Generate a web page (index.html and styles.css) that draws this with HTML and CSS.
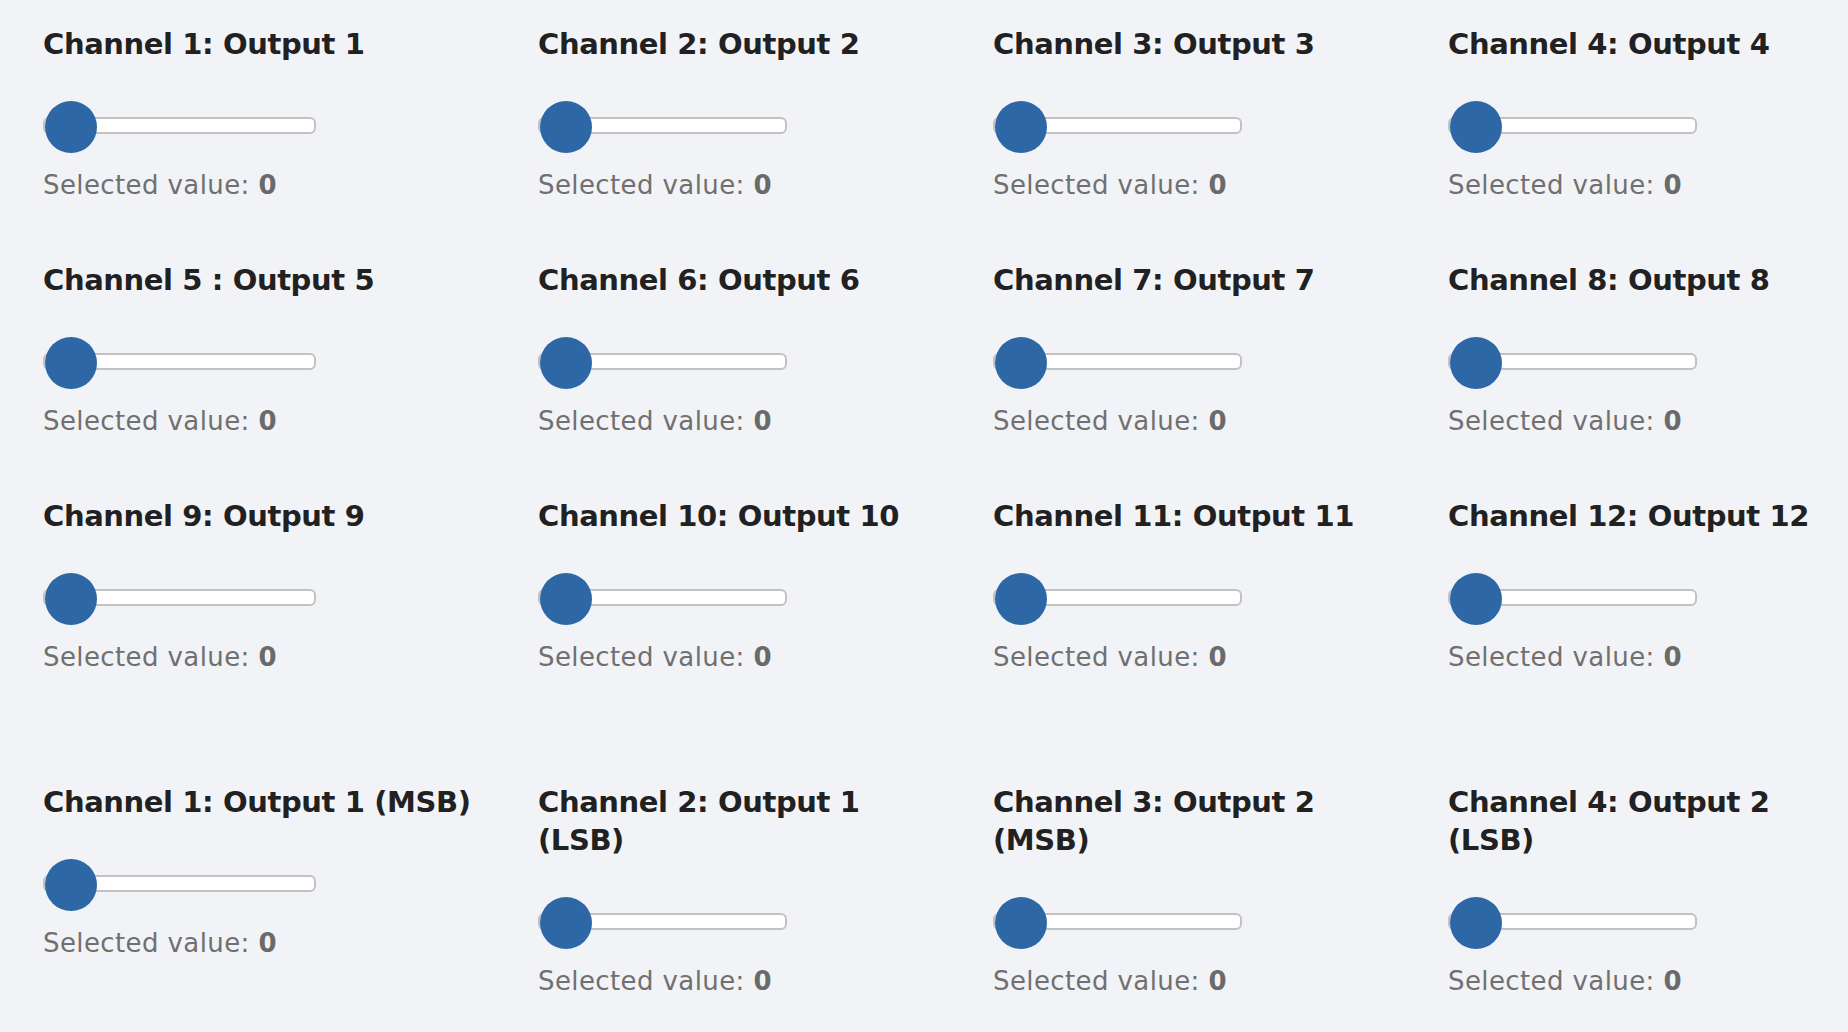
FILE: index.html
```html
<html>
	<head>
		<title>DMX Channels</title>
		<link rel="stylesheet" href="styles.css">
	</head>
	<body>
		<div class="channels">
			<div class="channel">
				<h3>Channel 1: Output 1</h3>
				<input type="range" class="slider" min="0" max="255" value="0" oninput="Show(this)">
				<p>Selected value: <b>0</b></p>
			</div>
			<div class="channel">
				<h3>Channel 2: Output 2</h3>
				<input type="range" class="slider" min="0" max="255" value="0" oninput="Show(this)">
				<p>Selected value: <b>0</b></p>
			</div>
			<div class="channel">
				<h3>Channel 3: Output 3</h3>
				<input type="range" class="slider" min="0" max="255" value="0" oninput="Show(this)">
				<p>Selected value: <b>0</b></p>
			</div>
			<div class="channel">
				<h3>Channel 4: Output 4</h3>
				<input type="range" class="slider" min="0" max="255" value="0" oninput="Show(this)">
				<p>Selected value: <b>0</b></p>
			</div>
			<div class="channel">
				<h3>Channel 5 : Output 5</h3>
				<input type="range" class="slider" min="0" max="255" value="0" oninput="Show(this)">
				<p>Selected value: <b>0</b></p>
			</div>
			<div class="channel">
				<h3>Channel 6: Output 6</h3>
				<input type="range" class="slider" min="0" max="255" value="0" oninput="Show(this)">
				<p>Selected value: <b>0</b></p>
			</div>
			<div class="channel">
				<h3>Channel 7: Output 7</h3>
				<input type="range" class="slider" min="0" max="255" value="0" oninput="Show(this)">
				<p>Selected value: <b>0</b></p>
			</div>
			<div class="channel">
				<h3>Channel 8: Output 8</h3>
				<input type="range" class="slider" min="0" max="255" value="0" oninput="Show(this)">
				<p>Selected value: <b>0</b></p>
			</div>
			<div class="channel">
				<h3>Channel 9: Output 9</h3>
				<input type="range" class="slider" min="0" max="255" value="0" oninput="Show(this)">
				<p>Selected value: <b>0</b></p>
			</div>
			<div class="channel">
				<h3>Channel 10: Output 10</h3>
				<input type="range" class="slider" min="0" max="255" value="0" oninput="Show(this)">
				<p>Selected value: <b>0</b></p>
			</div>
			<div class="channel">
				<h3>Channel 11: Output 11</h3>
				<input type="range" class="slider" min="0" max="255" value="0" oninput="Show(this)">
				<p>Selected value: <b>0</b></p>
			</div>
			<div class="channel">
				<h3>Channel 12: Output 12</h3>
				<input type="range" class="slider" min="0" max="255" value="0" oninput="Show(this)">
				<p>Selected value: <b>0</b></p>
			</div>
		</div>

		<div class="channels channels16">
			<div class="channel">
				<h3>Channel 1: Output 1 (MSB)</h3>
				<input type="range" class="slider" min="0" max="255" value="0" oninput="Show(this)">
				<p>Selected value: <b>0</b></p>
			</div>
			<div class="channel">
				<h3>Channel 2: Output 1 (LSB)</h3>
				<input type="range" class="slider" min="0" max="255" value="0" oninput="Show(this)">
				<p>Selected value: <b>0</b></p>
			</div>
			<div class="channel">
				<h3>Channel 3: Output 2 (MSB)</h3>
				<input type="range" class="slider" min="0" max="255" value="0" oninput="Show(this)">
				<p>Selected value: <b>0</b></p>
			</div>
			<div class="channel">
				<h3>Channel 4: Output 2 (LSB)</h3>
				<input type="range" class="slider" min="0" max="255" value="0" oninput="Show(this)">
				<p>Selected value: <b>0</b></p>
			</div>
		</div>
		<script>
			function Show(slider){
				slider.parentNode.getElementsByTagName("b")[0].innerHTML = slider.value;
			}
		</script>
	</body>
</html>
```

FILE: styles.css
```css
body {
	margin: 0;
	padding: 25px 0 0 43px;
	background-color: #F2F3F7;
	font-family: "DejaVu Sans", sans-serif;
}

.channels {
	display: grid;
	grid-template-columns: 455px 415px 415px 1fr;
	column-gap: 40px;
	row-gap: 61px;
	align-items: start;
}

.channels16 {
	margin-top: 111px;
}

.channel h3 {
	margin: 0 0 36px 0;
	font-size: 29px;
	line-height: 38px;
	font-weight: bold;
	letter-spacing: -0.4px;
	color: #212121;
}

.channel p {
	margin: 0;
	font-size: 26px;
	line-height: 30px;
	letter-spacing: 0.4px;
	color: #707070;
}

.channel p b {
	color: #6A6A6A;
}

.slider {
	-webkit-appearance: none;
	appearance: none;
	display: block;
	width: 249px;
	height: 52px;
	margin: 0 0 19px 0;
	padding: 0;
	background: transparent;
}

.channel:nth-child(4n+1) .slider {
	width: 273px;
}

.slider::-webkit-slider-runnable-track {
	height: 17px;
	background-color: white;
	border: 2px solid #C2C2C2;
	border-radius: 6px;
}

.slider::-webkit-slider-thumb {
	-webkit-appearance: none;
	width: 52px;
	height: 52px;
	margin-top: -17.5px;
	border: none;
	border-radius: 50%;
	background-color: #2E67A6;
	cursor: pointer;
}
```
